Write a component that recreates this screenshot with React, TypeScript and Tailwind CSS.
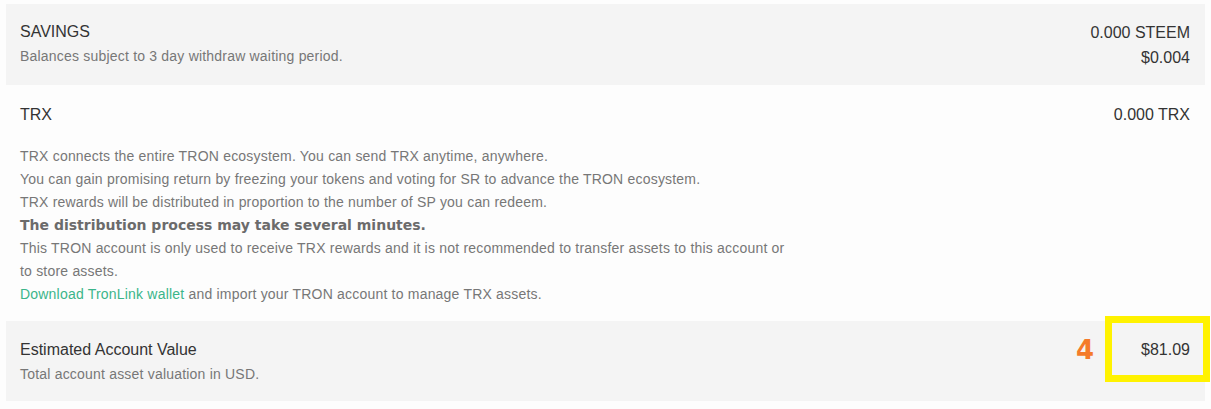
import React from "react";

const Row = ({
  title,
  sub,
  right,
  className = "",
}: {
  title: string;
  sub?: React.ReactNode;
  right: React.ReactNode;
  className?: string;
}) => (
  <div className={`flex justify-between pl-[14px] pr-[15px] ${className}`}>
    <div>
      <div className="text-[16px] leading-[24px] text-[#333]">{title}</div>
      {sub}
    </div>
    <div className="text-right text-[16px] text-[#333]">{right}</div>
  </div>
);

export default function App() {
  return (
    <div
      className="relative w-[1211px] h-[409px] bg-[#fdfdfd] pt-[4px] px-[6px]"
      style={{ fontFamily: '"Liberation Sans", Arial, sans-serif' }}
    >
      {/* Savings */}
      <Row
        className="bg-[#f4f4f4] h-[81px] pt-[16px]"
        title="SAVINGS"
        sub={
          <div className="text-[14px] tracking-[0.2px] leading-[20px] mt-[2px] text-[#777]">
            Balances subject to 3 day withdraw waiting period.
          </div>
        }
        right={
          <div className="leading-[25px]">
            <div>0.000 STEEM</div>
            <div>$0.004</div>
          </div>
        }
      />

      {/* TRX */}
      <div className="h-[236px] pt-[18px] pl-[14px] pr-[15px]">
        <div className="flex justify-between text-[16px] leading-[24px] text-[#333]">
          <span>TRX</span>
          <span>0.000 TRX</span>
        </div>
        <div className="mt-[18px] text-[14px] tracking-[0.2px] leading-[23px] text-[#777]">
          <div>TRX connects the entire TRON ecosystem. You can send TRX anytime, anywhere.</div>
          <div>You can gain promising return by freezing your tokens and voting for SR to advance the TRON ecosystem.</div>
          <div>TRX rewards will be distributed in proportion to the number of SP you can redeem.</div>
          <div
            className="font-bold text-[14px] tracking-normal text-[#6b6b6b]"
            style={{ fontFamily: '"DejaVu Sans", Verdana, sans-serif' }}
          >
            The distribution process may take several minutes.
          </div>
          <div>This TRON account is only used to receive TRX rewards and it is not recommended to transfer assets to this account or</div>
          <div>to store assets.</div>
          <div>
            <span className="text-[#3bb58a]">Download TronLink wallet</span> and import your TRON account to manage TRX assets.
          </div>
        </div>
      </div>

      {/* Estimated value */}
      <Row
        className="bg-[#f4f4f4] h-[80px] pt-[17px]"
        title="Estimated Account Value"
        sub={
          <div className="text-[14px] tracking-[0.2px] leading-[20px] mt-[2px] text-[#777]">
            Total account asset valuation in USD.
          </div>
        }
        right={<div className="leading-[24px]">$81.09</div>}
      />

      {/* annotation overlay */}
      <div className="absolute left-[1105px] top-[316px] w-[105px] h-[66px] border-[7px] border-[#fff200]" />
      <div
        className="absolute left-[1076px] top-[335px] text-[26px] leading-[30px] font-bold text-[#f47b2a]"
        style={{ fontFamily: '"DejaVu Sans", Verdana, sans-serif' }}
      >
        4
      </div>
    </div>
  );
}
